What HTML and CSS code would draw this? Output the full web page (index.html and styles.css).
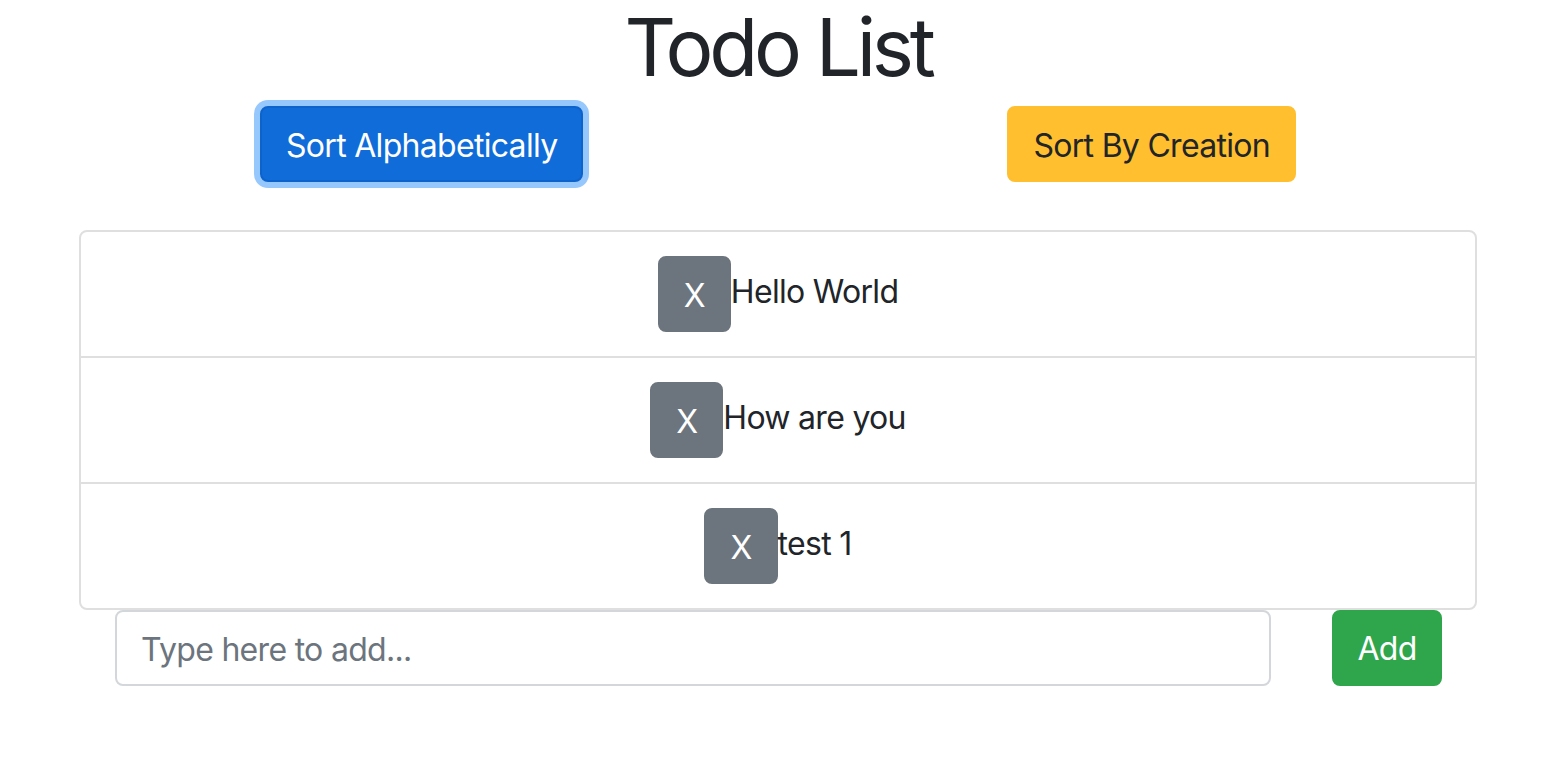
FILE: index.html
```html
<!DOCTYPE html>
<html lang="en">
<head>
<meta charset="utf-8">
<title>Todo List</title>
<link rel="stylesheet" href="styles.css">
</head>
<body>
<div class="app">
  <h1 class="title">Todo List</h1>
  <div class="sort-row">
    <button class="btn btn-primary focused">Sort Alphabetically</button>
    <button class="btn btn-warning">Sort By Creation</button>
  </div>
  <ul class="list">
    <li class="item"><button class="btn btn-secondary">X</button><span class="item-text">Hello World</span></li>
    <li class="item"><button class="btn btn-secondary">X</button><span class="item-text">How are you</span></li>
    <li class="item"><button class="btn btn-secondary">X</button><span class="item-text">test 1</span></li>
  </ul>
  <div class="add-row">
    <input class="input" type="text" placeholder="Type here to add...">
    <button class="btn btn-success add-btn">Add</button>
  </div>
</div>
</body>
</html>
```
FILE: styles.css
```css
html, body {
  margin: 0;
  padding: 0;
  background: #fff;
}
body {
  font-family: Inter, "Liberation Sans", sans-serif;
  color: #212529;
  font-size: 32px;
  line-height: 1.5;
  letter-spacing: -0.7px;
}
.app {
  width: 1398px;
  margin-left: 79px;
}
.title {
  margin: -1px 0 0 0;
  text-align: center;
  font-size: 80px;
  font-weight: 400;
  line-height: 96px;
  letter-spacing: -4.3px;
}
.sort-row {
  display: flex;
  justify-content: space-between;
  padding: 0 181px;
  margin-top: 11px;
}
.btn {
  font-family: inherit;
  font-size: 32px;
  line-height: 48px;
  letter-spacing: -0.7px;
  padding: 14px 24px 10px;
  border: 2px solid transparent;
  border-radius: 8px;
  cursor: pointer;
  margin: 0;
}
.btn-primary {
  background: #106cd9;
  border-color: #0d63cc;
  color: #fff;
}
.focused {
  box-shadow: 0 0 0 6px #97c8fd;
}
.btn-warning {
  background: #ffbf2e;
  border-color: #ffbf2e;
  color: #212529;
}
.btn-secondary {
  background: #6c757d;
  border-color: #6c757d;
  color: #fff;
}
.btn-success {
  background: #2fa64b;
  border-color: #2fa64b;
  color: #fff;
}
.list {
  list-style: none;
  margin: 48px 0 0 0;
  padding: 0;
  border: 2px solid #dfdfdf;
  border-radius: 8px;
}
.item {
  display: flex;
  justify-content: center;
  align-items: center;
  padding: 24px 40px;
  height: 76px;
}
.item + .item {
  border-top: 2px solid #dfdfdf;
}
.item-text {
  margin-bottom: 5px;
}
.add-row {
  display: flex;
  align-items: center;
  padding: 0 35px 0 36px;
  gap: 61px;
}
.input {
  flex: 1;
  height: 76px;
  box-sizing: border-box;
  border: 2px solid #d3d6da;
  border-radius: 8px;
  padding: 13px 24px 11px;
  font-family: inherit;
  font-size: 32px;
  letter-spacing: -0.7px;
  color: #495057;
  outline: none;
}
.input::placeholder {
  color: #6c757d;
}
.add-btn {
  width: 110px;
  height: 76px;
  padding: 2px 0 0;
}
```
